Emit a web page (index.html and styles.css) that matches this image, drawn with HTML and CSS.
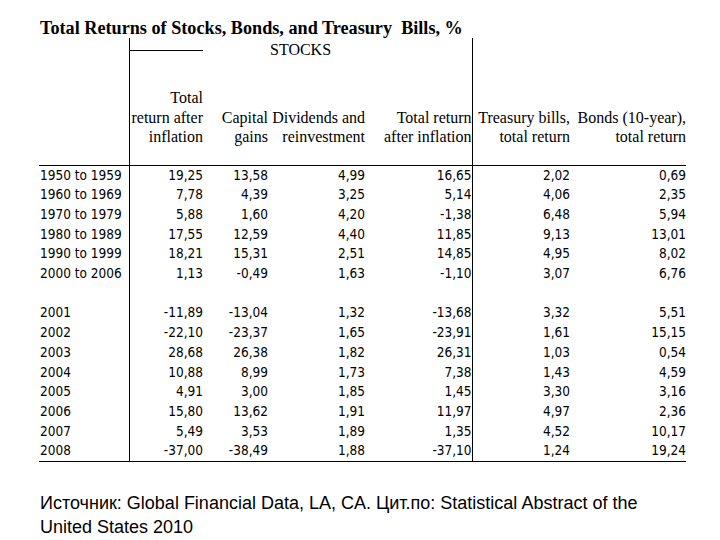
FILE: index.html
```html
<!DOCTYPE html>
<html lang="en">
<head>
<meta charset="utf-8">
<title>Total Returns of Stocks, Bonds, and Treasury Bills</title>
<link rel="stylesheet" href="styles.css">
</head>
<body>
<div class="page">
  <h1 class="title">Total Returns of Stocks, Bonds, and Treasury&nbsp; Bills, %</h1>
  <table class="returns">
    <colgroup>
      <col class="w-label"><col class="w-c1"><col class="w-c2"><col class="w-c3"><col class="w-c4"><col class="w-c5"><col class="w-c6">
    </colgroup>
    <tbody>
      <tr class="top-a">
        <td rowspan="2"></td>
        <td class="vl rule-under"></td>
        <td colspan="3" rowspan="2" class="vr stocks">STOCKS</td>
        <td rowspan="2"></td>
        <td rowspan="2"></td>
      </tr>
      <tr class="top-b">
        <td class="vl"></td>
      </tr>
      <tr class="head">
        <td></td>
        <td class="vl">Total<br>return after<br>inflation</td>
        <td>Capital<br>gains</td>
        <td>Dividends and<br>reinvestment</td>
        <td class="vr">Total return<br>after inflation</td>
        <td>Treasury bills,<br>total return</td>
        <td>Bonds (10-year),<br>total return</td>
      </tr>
      <tr class="row first"><td class="lbl">1950 to 1959</td><td class="vl">19,25</td><td>13,58</td><td>4,99</td><td class="vr">16,65</td><td>2,02</td><td>0,69</td></tr>
      <tr class="row"><td class="lbl">1960 to 1969</td><td class="vl">7,78</td><td>4,39</td><td>3,25</td><td class="vr">5,14</td><td>4,06</td><td>2,35</td></tr>
      <tr class="row"><td class="lbl">1970 to 1979</td><td class="vl">5,88</td><td>1,60</td><td>4,20</td><td class="vr">-1,38</td><td>6,48</td><td>5,94</td></tr>
      <tr class="row"><td class="lbl">1980 to 1989</td><td class="vl">17,55</td><td>12,59</td><td>4,40</td><td class="vr">11,85</td><td>9,13</td><td>13,01</td></tr>
      <tr class="row"><td class="lbl">1990 to 1999</td><td class="vl">18,21</td><td>15,31</td><td>2,51</td><td class="vr">14,85</td><td>4,95</td><td>8,02</td></tr>
      <tr class="row"><td class="lbl">2000 to 2006</td><td class="vl">1,13</td><td>-0,49</td><td>1,63</td><td class="vr">-1,10</td><td>3,07</td><td>6,76</td></tr>
      <tr class="row"><td></td><td class="vl"></td><td></td><td></td><td class="vr"></td><td></td><td></td></tr>
      <tr class="row"><td class="lbl">2001</td><td class="vl">-11,89</td><td>-13,04</td><td>1,32</td><td class="vr">-13,68</td><td>3,32</td><td>5,51</td></tr>
      <tr class="row"><td class="lbl">2002</td><td class="vl">-22,10</td><td>-23,37</td><td>1,65</td><td class="vr">-23,91</td><td>1,61</td><td>15,15</td></tr>
      <tr class="row"><td class="lbl">2003</td><td class="vl">28,68</td><td>26,38</td><td>1,82</td><td class="vr">26,31</td><td>1,03</td><td>0,54</td></tr>
      <tr class="row"><td class="lbl">2004</td><td class="vl">10,88</td><td>8,99</td><td>1,73</td><td class="vr">7,38</td><td>1,43</td><td>4,59</td></tr>
      <tr class="row"><td class="lbl">2005</td><td class="vl">4,91</td><td>3,00</td><td>1,85</td><td class="vr">1,45</td><td>3,30</td><td>3,16</td></tr>
      <tr class="row"><td class="lbl">2006</td><td class="vl">15,80</td><td>13,62</td><td>1,91</td><td class="vr">11,97</td><td>4,97</td><td>2,36</td></tr>
      <tr class="row"><td class="lbl">2007</td><td class="vl">5,49</td><td>3,53</td><td>1,89</td><td class="vr">1,35</td><td>4,52</td><td>10,17</td></tr>
      <tr class="row last"><td class="lbl">2008</td><td class="vl">-37,00</td><td>-38,49</td><td>1,88</td><td class="vr">-37,10</td><td>1,24</td><td>19,24</td></tr>
    </tbody>
  </table>
  <p class="source">Источник: Global Financial Data, LA, CA. Цит.по: Statistical Abstract of the<br>United States 2010</p>
</div>
</body>
</html>
```

FILE: styles.css
```css
html, body {
  margin: 0;
  padding: 0;
  background: #ffffff;
  color: #000000;
}

.page {
  padding: 19px 0 0 39px;
  width: 647px;
}

.title {
  margin: 0;
  padding-left: 1px;
  font-family: "Liberation Serif", "Times New Roman", serif;
  font-size: 18.2px;
  font-weight: bold;
  line-height: 19px;
  height: 19px;
  white-space: nowrap;
}

.returns {
  border-collapse: collapse;
  border-spacing: 0;
  table-layout: fixed;
  width: 647px;
  font-family: "DejaVu Sans", "Liberation Sans", sans-serif;
  font-stretch: condensed;
  font-size: 13.5px;
}

.w-label { width: 90px; }
.w-c1 { width: 74px; }
.w-c2 { width: 65px; }
.w-c3 { width: 97px; }
.w-c4 { width: 107px; }
.w-c5 { width: 98px; }
.w-c6 { width: 116px; }

.returns td {
  padding: 0;
  text-align: right;
  vertical-align: middle;
  white-space: nowrap;
}

.returns td.vl { border-left: 1px solid #000; }
.returns td.vr { border-right: 1px solid #000; }

.top-a { height: 12px; }
.top-b { height: 13px; }

.returns td.rule-under { border-bottom: 1px solid #000; }

.returns td.stocks {
  vertical-align: top;
  text-align: left;
  padding: 2px 0 0 67px;
  font-family: "Liberation Serif", "Times New Roman", serif;
  font-stretch: normal;
  font-size: 16px;
  line-height: 20px;
}

.head td {
  height: 102px;
  vertical-align: bottom;
  padding-bottom: 18px;
  font-family: "Liberation Serif", "Times New Roman", serif;
  font-stretch: normal;
  font-size: 16px;
  line-height: 19.5px;
  box-sizing: border-box;
}

.row td {
  height: 19.7px;
  line-height: 19.7px;
}

.row.first td { border-top: 1px solid #000; }
.row.last td { border-bottom: 1px solid #000; }

.returns td.lbl {
  text-align: left;
  padding-left: 1px;
}

.source {
  margin: 29px 0 0 1px;
  font-family: "Liberation Sans", Arial, sans-serif;
  font-size: 18px;
  line-height: 24px;
  white-space: nowrap;
}
```
